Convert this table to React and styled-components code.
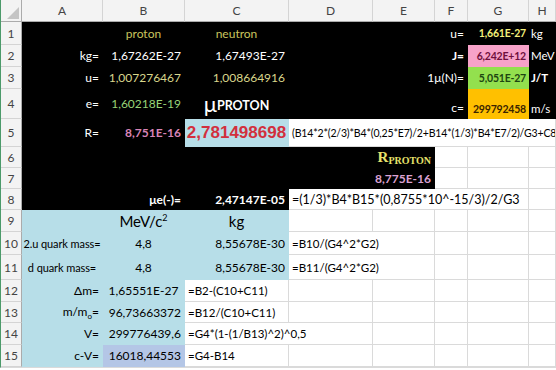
import React from 'react';
import styled, { createGlobalStyle } from 'styled-components';

const GlobalStyle = createGlobalStyle`
  html, body { margin: 0; padding: 0; background: #fff; }
  body { width: 556px; height: 370px; overflow: hidden; font-family: Lato, "Open Sans", sans-serif; }
  * { box-sizing: border-box; }
`;

const COLS = [21, 81, 82, 104, 84, 62, 33, 61, 27];
const ROWS = [22, 23, 22, 22, 30, 28, 21, 21, 21, 22, 23, 25, 22, 21, 22, 22];

const FILLS = {
  black: '#000',
  blue: '#b7dee8',
  lavender: '#b4c6e6',
  pink: '#f7a2c9',
  green: '#93e04e',
  orange: '#ffc000',
};

const Sheet = styled.div`
  display: grid;
  grid-template-columns: ${COLS.map((c) => c + 'px').join(' ')};
  grid-template-rows: ${ROWS.map((r) => r + 'px').join(' ')};
  border-left: 1px solid #4c9a6a;
  border-bottom: 1px solid #dadada;
  width: 556px;
  overflow: hidden;
`;

const Corner = styled.div`
  background: #f3f3f3;
  border-right: 1px solid #ababab;
  border-bottom: 1px solid #ababab;
  position: relative;
  &::after {
    content: '';
    position: absolute;
    right: 2px;
    bottom: 2px;
    border-left: 12px solid transparent;
    border-bottom: 12px solid #c4c4c4;
  }
`;

const ColHead = styled.div`
  background: #f3f3f3;
  color: #444;
  font-size: 12px;
  display: flex;
  align-items: center;
  justify-content: center;
  border-right: 1px solid #d4d4d4;
  border-bottom: 1px solid #ababab;
`;

const RowHead = styled.div`
  background: #f3f3f3;
  color: #444;
  font-size: 12px;
  display: flex;
  align-items: center;
  justify-content: center;
  border-right: 1px solid #ababab;
  border-bottom: 1px solid #d4d4d4;
`;

const justify = { left: 'flex-start', center: 'center', right: 'flex-end' };

const Cell = styled.div`
  grid-column: span ${({ $span }) => $span || 1};
  display: flex;
  align-items: ${({ $v }) => ($v === 'bottom' ? 'flex-end' : 'center')};
  justify-content: ${({ $align }) => justify[$align || 'left']};
  padding: ${({ $v }) => ($v === 'bottom' ? '0 3px 3px' : '0 3px')};
  background: ${({ $fill }) => ($fill ? FILLS[$fill] : '#fff')};
  color: ${({ $color }) => $color || '#000'};
  font-size: ${({ $size }) => $size || 12}px;
  font-weight: ${({ $bold }) => ($bold ? 700 : 400)};
  white-space: nowrap;
  overflow: hidden;
  border-right: 1px solid ${({ $fill }) => ($fill ? FILLS[$fill] : '#dadada')};
  border-bottom: 1px solid ${({ $fill }) => ($fill ? FILLS[$fill] : '#dadada')};
`;

// the narrow G column holds the bold constants
const Constant = styled(Cell)`
  font-size: 10.5px;
  font-weight: 700;
  letter-spacing: -0.2px;
  padding: ${({ $v }) => ($v === 'bottom' ? '0 2px 3px 1px' : '0 2px 0 1px')};
  justify-content: flex-end;
`;

const Unit = styled(Cell)`
  padding-left: 2px;
  padding-right: 0;
  font-size: 11.5px;
`;

const Label = styled(Cell)`
  font-size: 11px;
  letter-spacing: -0.1px;
  padding: 0 1px;
`;

const Formula = styled(Cell)`
  font-size: ${({ $size }) => $size || 11.5}px;
  letter-spacing: ${({ $tight }) => ($tight ? '-0.15px' : 'normal')};
  padding-left: 3px;
`;

const BigValue = styled(Cell)`
  font-family: "Liberation Sans", Arial, sans-serif;
  font-size: 17px;
  font-weight: 700;
  color: #d2303d;
  justify-content: center;
`;

const Mu = styled.span`
  font-size: 22px;
  font-weight: 400;
  line-height: 1;
`;

const MuSub = styled.span`
  font-size: 12.5px;
  font-weight: 700;
  align-self: flex-end;
  margin-bottom: 5px;
`;

const RSymbol = styled.span`
  font-family: "Liberation Serif", "Times New Roman", serif;
  font-weight: 700;
  font-size: 15px;
  color: #e6e26c;
`;

const RSub = styled.span`
  font-family: "Liberation Serif", "Times New Roman", serif;
  font-weight: 700;
  font-size: 10px;
  color: #e6e26c;
  position: relative;
  top: 3px;
`;

const Sup = styled.sup`
  font-size: 9px;
  vertical-align: 6px;
`;

const SubO = styled.sub`
  font-size: 8px;
  vertical-align: -3px;
`;

const C = {
  olive: '#c9c55e',
  white: '#fff',
  paleYellow: '#d9d78c',
  green: '#98d477',
  pink: '#d884b6',
  lilac: '#dca2d2',
  gold: '#f4ef7a',
  maroon: '#6f0f3d',
  forest: '#1d4511',
  brown: '#3a2400',
};

const columns = ['A', 'B', 'C', 'D', 'E', 'F', 'G', 'H'];

const blanks = (n, fill) =>
  Array.from({ length: n }, (_, i) => <Cell key={'b' + i + fill} $fill={fill} />);

export default function App() {
  return (
    <>
      <GlobalStyle />
      <Sheet>
        <Corner />
        {columns.map((c) => (
          <ColHead key={c}>{c}</ColHead>
        ))}

        {/* 1 */}
        <RowHead>1</RowHead>
        <Cell $fill="black" />
        <Cell $fill="black" $align="center" $color={C.olive}>proton</Cell>
        <Cell $fill="black" $align="center" $color={C.olive}>neutron</Cell>
        <Cell $fill="black" />
        <Cell $fill="black" />
        <Cell $fill="black" $align="right" $color={C.white}>u=</Cell>
        <Constant $fill="black" $color={C.gold}>1,661E-27</Constant>
        <Unit $fill="black" $color={C.white}>kg</Unit>

        {/* 2 */}
        <RowHead>2</RowHead>
        <Cell $fill="black" $align="right" $color={C.white}>kg=</Cell>
        <Cell $fill="black" $align="right" $color={C.white}>1,67262E-27</Cell>
        <Cell $fill="black" $align="right" $color={C.white}>1,67493E-27</Cell>
        <Cell $fill="black" />
        <Cell $fill="black" />
        <Cell $fill="black" $align="right" $color={C.white} $bold>J=</Cell>
        <Constant $fill="pink" $color={C.maroon}>6,242E+12</Constant>
        <Unit $fill="black" $color={C.white}>MeV</Unit>

        {/* 3 */}
        <RowHead>3</RowHead>
        <Cell $fill="black" $align="right" $color={C.white}>u=</Cell>
        <Cell $fill="black" $align="right" $color={C.paleYellow}>1,007276467</Cell>
        <Cell $fill="black" $align="right" $color={C.paleYellow}>1,008664916</Cell>
        <Cell $fill="black" />
        <Cell $fill="black" $span={2} $align="right" $color={C.white}>1μ(N)=</Cell>
        <Constant $fill="green" $color={C.forest}>5,051E-27</Constant>
        <Unit $fill="black" $color={C.white} $bold>J/T</Unit>

        {/* 4 */}
        <RowHead>4</RowHead>
        <Cell $fill="black" $align="right" $color={C.white}>e=</Cell>
        <Cell $fill="black" $align="right" $color={C.green}>1,60218E-19</Cell>
        <Cell $fill="black" $align="center" $color={C.white}>
          <Mu>μ</Mu>
          <MuSub>PROTON</MuSub>
        </Cell>
        <Cell $fill="black" />
        <Cell $fill="black" />
        <Cell $fill="black" $v="bottom" $align="right" $color={C.white}>c=</Cell>
        <Constant $fill="orange" $v="bottom" $color={C.brown}>299792458</Constant>
        <Unit $fill="black" $v="bottom" $color={C.white}>m/s</Unit>

        {/* 5 */}
        <RowHead>5</RowHead>
        <Cell $fill="black" $align="right" $color={C.white}>R=</Cell>
        <Cell $fill="black" $align="right" $color={C.pink} $bold>8,751E-16</Cell>
        <BigValue $fill="blue">2,781498698</BigValue>
        <Formula $span={5} $size={10.5} $tight>(B14*2*(2/3)*B4*(0,25*E7)/2+B14*(1/3)*B4*E7/2)/G3+C8</Formula>

        {/* 6 */}
        <RowHead>6</RowHead>
        {blanks(4, 'black')}
        <Cell $fill="black" $align="right">
          <RSymbol>R</RSymbol>
          <RSub>PROTON</RSub>
        </Cell>
        {blanks(3)}

        {/* 7 */}
        <RowHead>7</RowHead>
        {blanks(4, 'black')}
        <Cell $fill="black" $align="right" $color={C.lilac} $bold>8,775E-16</Cell>
        {blanks(3)}

        {/* 8 */}
        <RowHead>8</RowHead>
        <Cell $fill="black" />
        <Cell $fill="black" $align="right" $color={C.white} $bold>μe(-)=</Cell>
        <Cell $fill="black" $align="right" $color={C.white} $bold>2,47147E-05</Cell>
        <Formula $span={4} $size={12.5}>=(1/3)*B4*B15*(0,8755*10^-15/3)/2/G3</Formula>
        <Cell />

        {/* 9 */}
        <RowHead>9</RowHead>
        <Cell $fill="blue" />
        <Cell $fill="blue" $align="center" $size={15}>
          <span>MeV/c<Sup>2</Sup></span>
        </Cell>
        <Cell $fill="blue" $align="center" $size={15}>kg</Cell>
        {blanks(5)}

        {/* 10 */}
        <RowHead>10</RowHead>
        <Label $fill="blue" $align="center">2.u quark mass=</Label>
        <Cell $fill="blue" $align="center">4,8</Cell>
        <Cell $fill="blue" $align="right">8,55678E-30</Cell>
        <Formula $span={2}>=B10/(G4^2*G2)</Formula>
        {blanks(3)}

        {/* 11 */}
        <RowHead>11</RowHead>
        <Label $fill="blue" $align="center">d quark mass=</Label>
        <Cell $fill="blue" $align="center">4,8</Cell>
        <Cell $fill="blue" $align="right">8,55678E-30</Cell>
        <Formula $span={2}>=B11/(G4^2*G2)</Formula>
        {blanks(3)}

        {/* 12 */}
        <RowHead>12</RowHead>
        <Cell $fill="blue" $align="right">Δm=</Cell>
        <Cell $fill="blue" $align="center">1,65551E-27</Cell>
        <Formula>=B2-(C10+C11)</Formula>
        {blanks(5)}

        {/* 13 */}
        <RowHead>13</RowHead>
        <Cell $fill="blue" $align="right">
          <span>m/m<SubO>o</SubO>=</span>
        </Cell>
        <Cell $fill="blue" $align="right">96,73663372</Cell>
        <Formula>=B12/(C10+C11)</Formula>
        {blanks(5)}

        {/* 14 */}
        <RowHead>14</RowHead>
        <Cell $fill="blue" $align="right">V=</Cell>
        <Cell $fill="blue" $align="right">299776439,6</Cell>
        <Formula $span={2}>=G4*(1-(1/B13)^2)^0,5</Formula>
        {blanks(4)}

        {/* 15 */}
        <RowHead>15</RowHead>
        <Cell $fill="blue" $align="right">c-V=</Cell>
        <Cell $fill="lavender" $align="right">16018,44553</Cell>
        <Formula>=G4-B14</Formula>
        {blanks(5)}
      </Sheet>
    </>
  );
}
